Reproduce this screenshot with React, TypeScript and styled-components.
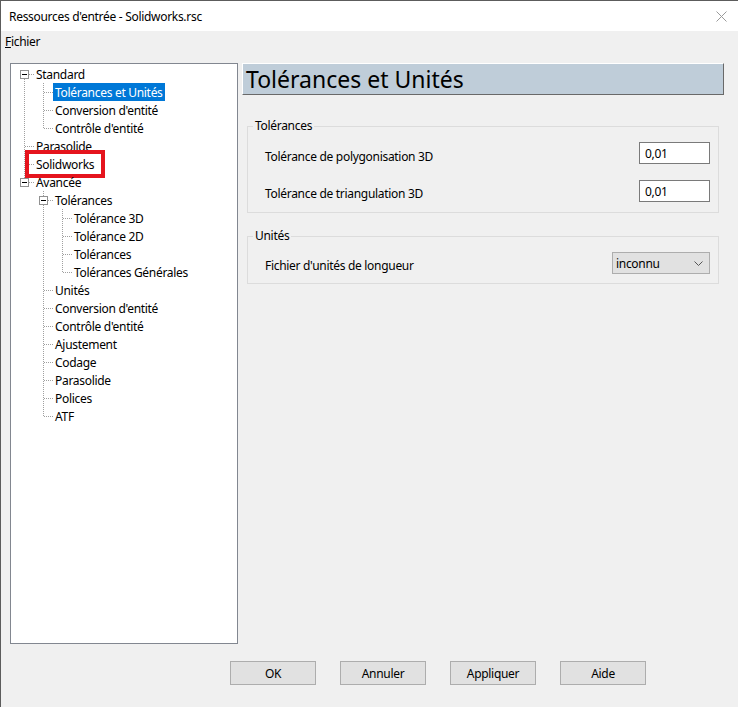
import styled, { createGlobalStyle } from "styled-components";

const GlobalStyle = createGlobalStyle`
  html, body {
    margin: 0;
    padding: 0;
    background: #f0f0f0;
  }
`;

const uiFont = `"Segoe UI", "Noto Sans", "Liberation Sans", sans-serif`;
const tight = "-0.3px";

type TreeNode = {
  label: string;
  children?: TreeNode[];
  selected?: boolean;
  marked?: boolean;
};

type FlatRow = {
  node: TreeNode;
  guides: boolean[];
  top: boolean;
  bottom: boolean;
  box: boolean;
};

const tree: TreeNode[] = [
  {
    label: "Standard",
    children: [
      { label: "Tolérances et Unités", selected: true },
      { label: "Conversion d'entité" },
      { label: "Contrôle d'entité" },
    ],
  },
  { label: "Parasolide" },
  { label: "Solidworks", marked: true },
  {
    label: "Avancée",
    children: [
      {
        label: "Tolérances",
        children: [
          { label: "Tolérance 3D" },
          { label: "Tolérance 2D" },
          { label: "Tolérances" },
          { label: "Tolérances Générales" },
        ],
      },
      { label: "Unités" },
      { label: "Conversion d'entité" },
      { label: "Contrôle d'entité" },
      { label: "Ajustement" },
      { label: "Codage" },
      { label: "Parasolide" },
      { label: "Polices" },
      { label: "ATF" },
    ],
  },
];

const flatten = (nodes: TreeNode[], guides: boolean[], out: FlatRow[]) => {
  nodes.forEach((node, i) => {
    const last = i === nodes.length - 1;
    out.push({
      node,
      guides,
      top: guides.length > 0 || i > 0,
      bottom: !last,
      box: !!node.children,
    });
    if (node.children) flatten(node.children, [...guides, !last], out);
  });
  return out;
};

const rows = flatten(tree, [], []);

const Window = styled.div`
  width: 738px;
  height: 707px;
  box-sizing: border-box;
  border-top: 1px solid #5c5c5c;
  border-left: 1px solid #5c5c5c;
  background: #f0f0f0;
  display: flex;
  flex-direction: column;
  font-family: ${uiFont};
  font-size: 12px;
  letter-spacing: ${tight};
  color: #000;
`;

const TitleBar = styled.div`
  height: 30px;
  background: #fff;
  display: flex;
  align-items: center;
  justify-content: space-between;
  padding: 0 11px 0 8px;
`;

const MenuBar = styled.div`
  height: 20px;
  display: flex;
  align-items: center;
  padding-left: 4px;
`;

const Main = styled.div`
  display: flex;
  gap: 4px;
  padding: 12px 0 0 9px;
`;

const TreeBox = styled.div`
  width: 228px;
  height: 581px;
  box-sizing: border-box;
  border: 1px solid #828790;
  background: #fff;
  padding: 1px 0 0 4px;
`;

const TreeRow = styled.div`
  display: flex;
  align-items: center;
  height: 18px;
`;

const TreeLabel = styled.span<{ $selected?: boolean }>`
  position: relative;
  padding: 0 2px;
  height: 18px;
  line-height: 20px;
  white-space: nowrap;
  background: ${(p) => (p.$selected ? "#0078d7" : "transparent")};
  color: ${(p) => (p.$selected ? "#fff" : "#000")};
`;

const Marker = styled.span`
  position: absolute;
  left: -9px;
  top: -5px;
  width: 80px;
  height: 28px;
  box-sizing: border-box;
  border: 4px solid #e5141d;
`;

const Panel = styled.div`
  width: 482px;
  display: flex;
  flex-direction: column;
`;

const PanelHeader = styled.div`
  height: 32px;
  box-sizing: border-box;
  background: #bfcdd9;
  border-top: 1px solid #fff;
  border-left: 1px solid #fff;
  border-right: 1px solid #696969;
  border-bottom: 1px solid #696969;
  padding-left: 3px;
  font-size: 23px;
  letter-spacing: 0;
  line-height: 30px;
`;

const Group = styled.fieldset<{ $top: number; $bottom: number }>`
  margin: ${(p) => p.$top}px 5px 0 5px;
  padding: 8px 8px ${(p) => p.$bottom}px 5px;
  min-width: 0;
  border: 1px solid #dcdcdc;
  display: flex;
  flex-direction: column;
  gap: 15px;
`;

const Legend = styled.legend`
  padding: 0 2px;
  line-height: 16px;
`;

const FieldRow = styled.div`
  display: flex;
  justify-content: space-between;
  align-items: flex-start;
`;

const FieldLabel = styled.span<{ $drop: number }>`
  margin: ${(p) => p.$drop}px 0 0 12px;
  line-height: 16px;
`;

const TextBox = styled.input`
  width: 71px;
  height: 22px;
  box-sizing: border-box;
  border: 1px solid #7a7a7a;
  background: #fff;
  padding: 0 0 0 5px;
  margin: 0;
  font-family: ${uiFont};
  font-size: 12px;
  letter-spacing: ${tight};
  color: #000;
  outline: none;
`;

const Combo = styled.div`
  width: 98px;
  height: 22px;
  box-sizing: border-box;
  border: 1px solid #adadad;
  background: #e1e1e1;
  display: flex;
  align-items: center;
  justify-content: space-between;
  padding: 0 6px 0 3px;
`;

const Footer = styled.div`
  display: flex;
  gap: 24px;
  padding: 17px 0 0 229px;
`;

const Button = styled.button`
  width: 86px;
  height: 24px;
  box-sizing: border-box;
  border: 1px solid #adadad;
  background: #e1e1e1;
  font-family: ${uiFont};
  font-size: 12px;
  letter-spacing: ${tight};
  color: #000;
  padding: 0;
`;

const Connector = ({ row }: { row: FlatRow }) => {
  const dot = { stroke: "#a0a0a0", strokeWidth: 1, strokeDasharray: "1 1" };
  return (
    <>
      {row.guides.map((g, i) => (
        <svg key={i} width="19" height="18" shapeRendering="crispEdges">
          {g && <line x1="9.5" y1="0" x2="9.5" y2="18" {...dot} />}
        </svg>
      ))}
      <svg width="19" height="18" shapeRendering="crispEdges">
        {row.top && <line x1="9.5" y1="0" x2="9.5" y2="9" {...dot} />}
        {row.bottom && <line x1="9.5" y1="10" x2="9.5" y2="18" {...dot} />}
        <line x1="10" y1="9.5" x2="19" y2="9.5" {...dot} />
        {row.box && (
          <>
            <rect x="5.5" y="5.5" width="8" height="8" fill="#fff" stroke="#919191" />
            <line x1="7" y1="9.5" x2="12" y2="9.5" stroke="#000" />
          </>
        )}
      </svg>
    </>
  );
};

const App = () => {
  return (
    <>
      <GlobalStyle />
      <Window>
        <TitleBar>
          <span>Ressources d'entrée - Solidworks.rsc</span>
          <svg width="11" height="11" viewBox="0 0 11 11">
            <path d="M0.5 0.5 L10.5 10.5 M10.5 0.5 L0.5 10.5" stroke="#9a9a9a" strokeWidth="1" />
          </svg>
        </TitleBar>
        <MenuBar>
          <span>
            <u>F</u>ichier
          </span>
        </MenuBar>
        <Main>
          <TreeBox>
            {rows.map((row, i) => (
              <TreeRow key={i}>
                <Connector row={row} />
                <TreeLabel $selected={row.node.selected}>
                  {row.node.label}
                  {row.node.marked && <Marker />}
                </TreeLabel>
              </TreeRow>
            ))}
          </TreeBox>
          <Panel>
            <PanelHeader>Tolérances et Unités</PanelHeader>
            <Group $top={23} $bottom={10}>
              <Legend>Tolérances</Legend>
              <FieldRow>
                <FieldLabel $drop={7}>Tolérance de polygonisation 3D</FieldLabel>
                <TextBox readOnly value="0,01" />
              </FieldRow>
              <FieldRow>
                <FieldLabel $drop={6}>Tolérance de triangulation 3D</FieldLabel>
                <TextBox readOnly value="0,01" />
              </FieldRow>
            </Group>
            <Group $top={15} $bottom={9}>
              <Legend>Unités</Legend>
              <FieldRow>
                <FieldLabel $drop={6}>Fichier d'unités de longueur</FieldLabel>
                <Combo>
                  <span>inconnu</span>
                  <svg width="9" height="5" viewBox="0 0 9 5">
                    <path d="M0.5 0.5 L4.5 4.5 L8.5 0.5" fill="none" stroke="#555" />
                  </svg>
                </Combo>
              </FieldRow>
            </Group>
          </Panel>
        </Main>
        <Footer>
          <Button>OK</Button>
          <Button>Annuler</Button>
          <Button>Appliquer</Button>
          <Button>Aide</Button>
        </Footer>
      </Window>
    </>
  );
};

export default App;
